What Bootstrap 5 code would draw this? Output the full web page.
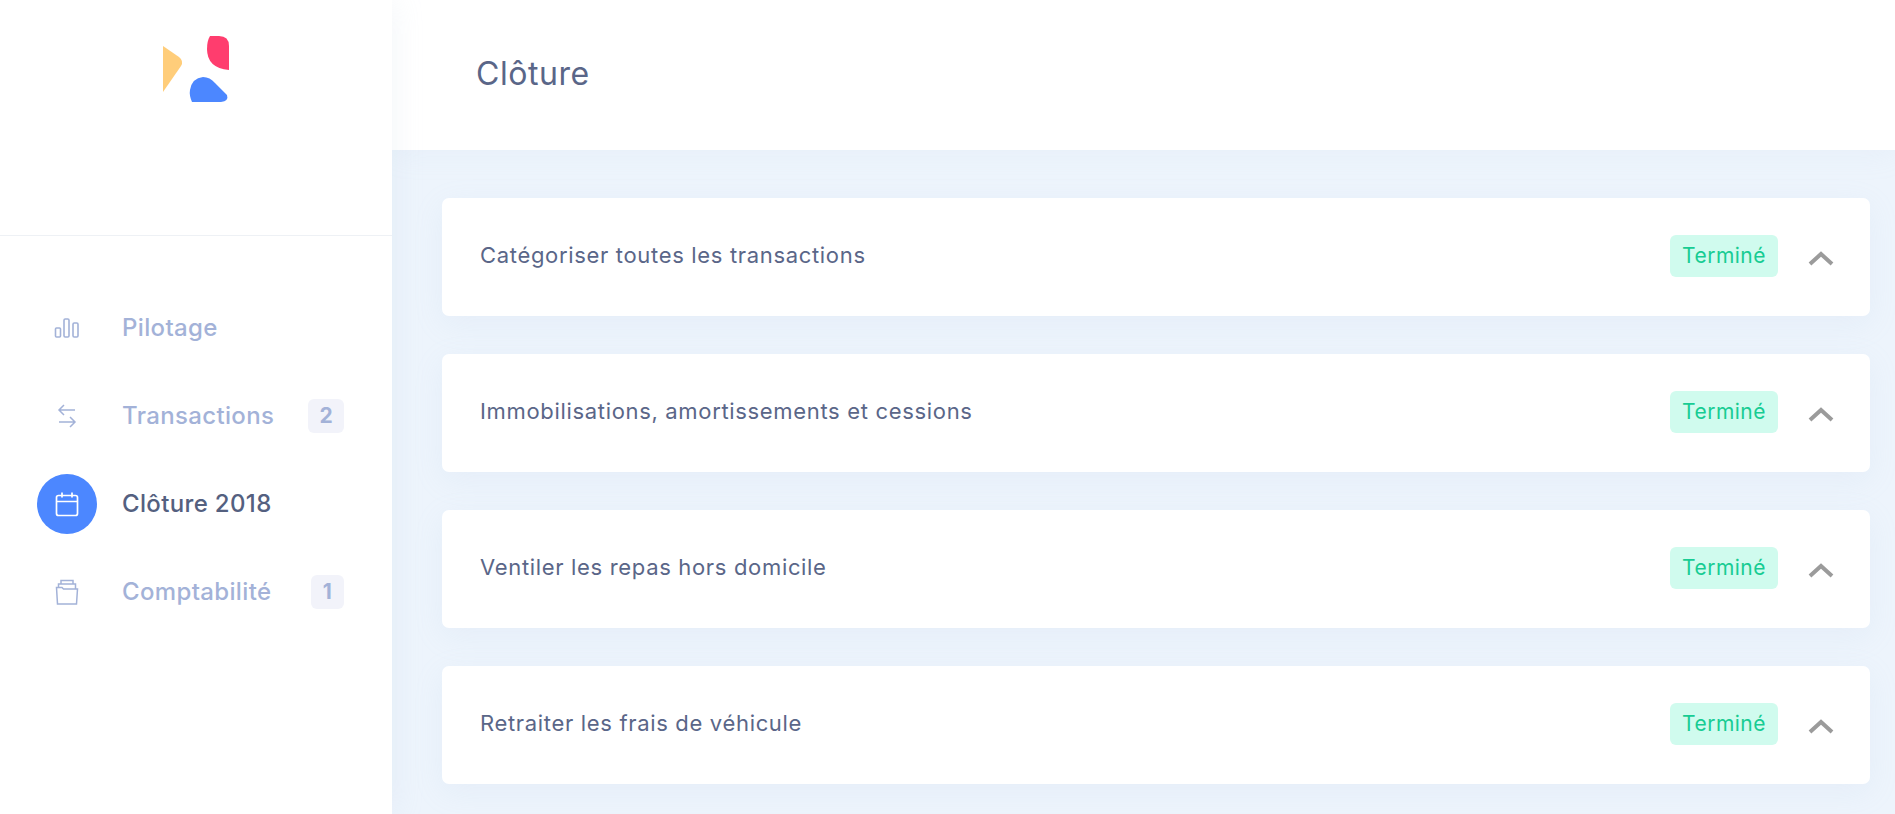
<!DOCTYPE html>
<html lang="fr">
<head>
<meta charset="utf-8">
<title>Clôture</title>
<link href="https://cdn.jsdelivr.net/npm/bootstrap@5.3.0/dist/css/bootstrap.min.css" rel="stylesheet">
<style>
html,body{height:100%;overflow:hidden}
body{font-family:Inter,"Noto Sans",sans-serif;background:#edf4fc;color:#5a6688}
.shell{height:814px}
.side{width:392px;flex:none;background:#fff;box-shadow:0 0 30px rgba(190,205,225,.2);z-index:2}
.logo-zone{height:236px;border-bottom:1px solid #eef1f5;padding-top:35px}
.logo-mark{display:block;margin-left:163px}
.menu{padding-top:48px}
.menu-row{height:88px;padding:0 48px 0 37px;font-size:24px;font-weight:500;letter-spacing:.35px;color:#a3b2d8}
.menu-row.on{color:#54607f}
.ico{width:60px;height:60px;flex:none;margin-right:25px;border-radius:50%}
.menu-row.on .ico{background:#4c87ff}
.count{background:#f2f3fa;color:#a3b2d8;font-size:21px;font-weight:700;height:34px;min-width:33px;padding:0 11px;border-radius:6px}
.top{height:150px;background:#fff;padding-left:84px;padding-bottom:2px;font-size:32px;letter-spacing:.55px;color:#5a6688;box-shadow:0 0 30px rgba(190,205,225,.15)}
.stack{padding:48px 25px 0 50px;gap:38px}
.task{height:118px;background:#fff;border-radius:7px;padding:0 36px 3px 38px;box-shadow:0 8px 30px rgba(170,195,225,.12);font-size:22px;letter-spacing:.67px;color:#5a6688}
.done{background:#d0fbee;color:#17cc93;font-size:21px;letter-spacing:.5px;height:42px;width:108px;border-radius:6px;margin-right:30px}
.chev{margin-top:4px}
</style>
</head>
<body>
<div class="d-flex shell">
  <aside class="side">
    <div class="logo-zone">
      <svg class="logo-mark" width="66" height="67" viewBox="0 0 66 67" aria-hidden="true">
        <path d="M0 11 L16 22 Q21 26 18 31 L0 57Z" fill="#ffcd7a"/>
        <path d="M47 1 H56 Q66 1 66 11 V35 Q44 33 44 14 Q44 6 47 1Z" fill="#ff3d6e"/>
        <path d="M29 67 Q26 60 27 55 Q29 43 40 42 Q47 42 52 48 L64 60 Q66 66 58 67Z" fill="#4c87ff"/>
      </svg>
    </div>
    <nav class="menu">
      <div class="menu-row d-flex align-items-center">
        <span class="ico d-flex align-items-center justify-content-center">
          <svg width="26" height="22" viewBox="0 0 26 22" fill="none" stroke="#a3b2d8" stroke-width="1.6"><rect x="1.5" y="11" width="5" height="9" rx="1"/><rect x="10" y="2" width="5" height="18" rx="1.200"/><rect x="19" y="6" width="5" height="14" rx="1.200"/></svg>
        </span>
        <span>Pilotage</span>
      </div>
      <div class="menu-row d-flex align-items-center">
        <span class="ico d-flex align-items-center justify-content-center">
          <svg width="20" height="26" viewBox="0 0 20 26" fill="none" stroke="#a3b2d8" stroke-width="1.500"><path d="M18 7H2M7 2 2 7l5 5"/><path d="M2 19h16M13 14l5 5-5 5"/></svg>
        </span>
        <span class="flex-grow-1">Transactions</span>
        <span class="count d-flex align-items-center justify-content-center">2</span>
      </div>
      <div class="menu-row on d-flex align-items-center">
        <span class="ico d-flex align-items-center justify-content-center">
          <svg width="24" height="25" viewBox="0 0 24 25" fill="none" stroke="#fff" stroke-width="1.700"><rect x="1.500" y="3.500" width="21" height="20" rx="2"/><path d="M1.500 9.500h21M7 .5v5M17 .5v5"/></svg>
        </span>
        <span>Clôture 2018</span>
      </div>
      <div class="menu-row d-flex align-items-center">
        <span class="ico d-flex align-items-center justify-content-center">
          <svg width="24" height="26" viewBox="0 0 24 26" fill="none" stroke="#a3b2d8" stroke-width="1.500"><path d="M1.500 8.500 7 8.500l1.500 1.500h14l-1 15h-19z"/><path d="M3.500 8V5h17v5M6 5V1.500h12V5"/></svg>
        </span>
        <span class="flex-grow-1">Comptabilité</span>
        <span class="count d-flex align-items-center justify-content-center">1</span>
      </div>
    </nav>
  </aside>
  <main class="flex-grow-1">
    <header class="top d-flex align-items-center">Clôture</header>
    <section class="stack d-flex flex-column">
      <div class="task d-flex align-items-center"><span class="flex-grow-1">Catégoriser toutes les transactions</span><span class="done d-flex align-items-center justify-content-center">Terminé</span><svg class="chev" width="26" height="16" viewBox="0 0 26 16" fill="none" stroke="#9b9b9b" stroke-width="4"><path d="M2 14 13 4l11 10"/></svg></div>
      <div class="task d-flex align-items-center"><span class="flex-grow-1">Immobilisations, amortissements et cessions</span><span class="done d-flex align-items-center justify-content-center">Terminé</span><svg class="chev" width="26" height="16" viewBox="0 0 26 16" fill="none" stroke="#9b9b9b" stroke-width="4"><path d="M2 14 13 4l11 10"/></svg></div>
      <div class="task d-flex align-items-center"><span class="flex-grow-1">Ventiler les repas hors domicile</span><span class="done d-flex align-items-center justify-content-center">Terminé</span><svg class="chev" width="26" height="16" viewBox="0 0 26 16" fill="none" stroke="#9b9b9b" stroke-width="4"><path d="M2 14 13 4l11 10"/></svg></div>
      <div class="task d-flex align-items-center"><span class="flex-grow-1">Retraiter les frais de véhicule</span><span class="done d-flex align-items-center justify-content-center">Terminé</span><svg class="chev" width="26" height="16" viewBox="0 0 26 16" fill="none" stroke="#9b9b9b" stroke-width="4"><path d="M2 14 13 4l11 10"/></svg></div>
    </section>
  </main>
</div>
</body>
</html>
